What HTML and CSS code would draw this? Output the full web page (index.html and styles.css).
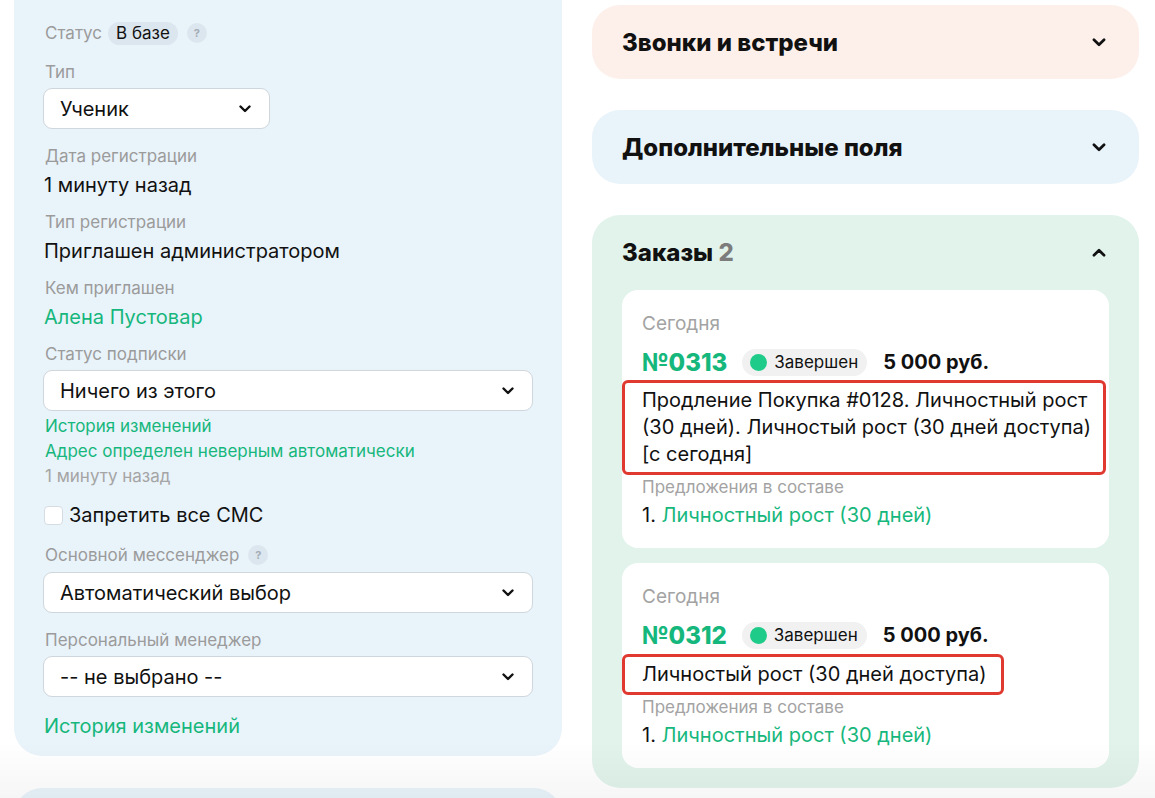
FILE: index.html
```html
<!DOCTYPE html>
<html lang="ru">

<head>
    <meta charset="UTF-8">
    <title>Карточка пользователя</title>
    <link rel="stylesheet" href="styles.css">
</head>

<body>
    <div class="layout">
        <div class="column">
            <section class="panel info">
                <div class="field row">
                    <span class="label">Статус</span>
                    <span class="tag">В базе</span>
                    <span class="hint">?</span>
                </div>

                <div class="field">
                    <div class="label">Тип</div>
                    <div class="select short">
                        <span>Ученик</span>
                        <svg class="chev" viewBox="0 0 12 8"><path d="M1.5 1.5 6 6l4.5-4.5" /></svg>
                    </div>
                </div>

                <div class="field">
                    <div class="label">Дата регистрации</div>
                    <div class="value">1 минуту назад</div>
                </div>

                <div class="field">
                    <div class="label">Тип регистрации</div>
                    <div class="value">Приглашен администратором</div>
                </div>

                <div class="field">
                    <div class="label">Кем приглашен</div>
                    <a class="value link" href="#">Алена Пустовар</a>
                </div>

                <div class="field">
                    <div class="label">Статус подписки</div>
                    <div class="select">
                        <span>Ничего из этого</span>
                        <svg class="chev" viewBox="0 0 12 8"><path d="M1.5 1.5 6 6l4.5-4.5" /></svg>
                    </div>
                    <a class="small link" href="#">История изменений</a>
                    <a class="small link" href="#">Адрес определен неверным автоматически</a>
                    <div class="small muted">1 минуту назад</div>
                </div>

                <label class="field check">
                    <span class="box"></span>
                    Запретить все СМС
                </label>

                <div class="field">
                    <div class="label row">Основной мессенджер <span class="hint">?</span></div>
                    <div class="select">
                        <span>Автоматический выбор</span>
                        <svg class="chev" viewBox="0 0 12 8"><path d="M1.5 1.5 6 6l4.5-4.5" /></svg>
                    </div>
                </div>

                <div class="field">
                    <div class="label">Персональный менеджер</div>
                    <div class="select">
                        <span>-- не выбрано --</span>
                        <svg class="chev" viewBox="0 0 12 8"><path d="M1.5 1.5 6 6l4.5-4.5" /></svg>
                    </div>
                </div>

                <a class="value link last" href="#">История изменений</a>
            </section>

            <section class="panel info next"></section>
        </div>

        <div class="column right">
            <section class="panel fold peach">
                <h2>Звонки и встречи</h2>
                <svg class="chev big" viewBox="0 0 12 8"><path d="M1.5 1.5 6 6l4.5-4.5" /></svg>
            </section>

            <section class="panel fold blue">
                <h2>Дополнительные поля</h2>
                <svg class="chev big" viewBox="0 0 12 8"><path d="M1.5 1.5 6 6l4.5-4.5" /></svg>
            </section>

            <section class="panel orders">
                <div class="orders-head">
                    <h2>Заказы <span class="count">2</span></h2>
                    <svg class="chev big" viewBox="0 0 12 8"><path d="M1.5 6.5 6 2l4.5 4.5" /></svg>
                </div>

                <article class="order">
                    <div class="date">Сегодня</div>
                    <div class="order-line">
                        <span class="num">№0313</span>
                        <span class="state"><i class="dot"></i>Завершен</span>
                        <span class="sum">5 000 руб.</span>
                    </div>
                    <p class="desc">Продление Покупка #0128. Личностный рост (30 дней). Личностый рост (30 дней доступа) [с сегодня]</p>
                    <div class="date small">Предложения в составе</div>
                    <div class="offer">1. <a href="#">Личностный рост (30 дней)</a></div>
                </article>

                <article class="order">
                    <div class="date">Сегодня</div>
                    <div class="order-line">
                        <span class="num">№0312</span>
                        <span class="state"><i class="dot"></i>Завершен</span>
                        <span class="sum">5 000 руб.</span>
                    </div>
                    <p class="desc fit">Личностый рост (30 дней доступа)</p>
                    <div class="date small">Предложения в составе</div>
                    <div class="offer">1. <a href="#">Личностный рост (30 дней)</a></div>
                </article>
            </section>
        </div>
    </div>
</body>

</html>
```

FILE: styles.css
```css
* {
    box-sizing: border-box;
}

body {
    margin: 0;
    background: #fff;
    font-family: Inter, "Noto Sans", sans-serif;
    color: #111;
    overflow: hidden;
}

/* light fade at the bottom of the window */
body::after {
    content: "";
    position: fixed;
    left: 0;
    right: 0;
    bottom: 0;
    height: 56px;
    background: linear-gradient(rgba(0, 0, 0, 0), rgba(0, 0, 0, 0.035));
    pointer-events: none;
}

a {
    text-decoration: none;
}

.layout {
    display: grid;
    grid-template-columns: 548px 547px;
    gap: 30px;
    padding-left: 14px;
}

.column {
    display: flex;
    flex-direction: column;
    gap: 32px;
}

.column.right {
    padding-top: 5px;
    gap: 31px;
}

.panel {
    border-radius: 28px;
}

/* left info panel */
.info {
    background: #e9f3fa;
    margin-top: -30px;
    padding: 51px 29px 17px;
    border-top-left-radius: 0;
    border-top-right-radius: 0;
}

.info.next {
    margin-top: 0;
    height: 120px;
    border-radius: 28px;
    padding: 0;
}

.field {
    display: flex;
    flex-direction: column;
    margin-bottom: 13px;
}

.row {
    flex-direction: row;
    align-items: center;
    gap: 6px;
}

.field.row {
    height: 24px;
    margin-bottom: 16px;
}

.label {
    font-size: 17px;
    line-height: 22px;
    color: #9b9b9b;
    margin-bottom: 5px;
    padding-left: 2px;
}

.label.row {
    display: flex;
    height: 24px;
    margin-bottom: 5px;
}

.field.row .label {
    margin: 0;
    padding-right: 0;
}

.tag {
    background: #dce6ee;
    border-radius: 12px;
    padding: 0 8px;
    font-size: 17px;
    line-height: 23px;
}

.hint {
    width: 20px;
    height: 20px;
    border-radius: 50%;
    background: #dce6ee;
    color: #a3acb4;
    font-size: 11px;
    font-weight: 700;
    display: flex;
    align-items: center;
    justify-content: center;
    margin-left: 3px;
}

.value {
    font-size: 20px;
    line-height: 26px;
    padding-left: 1px;
}

.value.last {
    margin-top: -2px;
}

.link {
    color: #16b77c;
}

.small {
    font-size: 17px;
    line-height: 25px;
    padding-left: 2px;
}

.muted {
    color: #a5a5a5;
}

.select {
    height: 41px;
    margin-bottom: 3px;
    background: #fff;
    border: 1px solid #cfd6dc;
    border-radius: 9px;
    display: flex;
    align-items: center;
    justify-content: space-between;
    padding: 0 18px 0 16px;
    font-size: 20px;
}

.select.short {
    width: 227px;
}

.chev {
    width: 12px;
    height: 8px;
    fill: none;
    stroke: #111;
    stroke-width: 2.4;
    stroke-linecap: round;
    stroke-linejoin: round;
}

.chev.big {
    width: 14px;
    height: 9px;
}

.check {
    flex-direction: row;
    align-items: center;
    gap: 6px;
    font-size: 20px;
    line-height: 26px;
    padding-left: 1px;
    margin-bottom: 15px;
}

.box {
    width: 19px;
    height: 19px;
    background: #fff;
    border: 1px solid #d6dde2;
    border-radius: 4px;
}

/* right column */
.fold {
    height: 74px;
    display: flex;
    align-items: center;
    justify-content: space-between;
    padding: 0 33px 0 30px;
}

.fold h2,
.orders h2 {
    margin: 0;
    font-size: 24px;
    font-weight: 800;
}

.peach {
    background: #fdf0eb;
}

.blue {
    background: #e9f3fa;
}

.orders {
    background: #e2f3ec;
    padding: 20px 30px 20px;
    display: flex;
    flex-direction: column;
    gap: 15px;
}

.orders-head {
    height: 34px;
    display: flex;
    align-items: center;
    justify-content: space-between;
    padding-right: 3px;
    margin-bottom: 6px;
}

.count {
    color: #7c7c7c;
}

.order {
    background: #fff;
    border-radius: 16px;
    padding: 22px 20px 20px;
}

.date {
    font-size: 19px;
    line-height: 24px;
    color: #a3a3a3;
}

.date.small {
    font-size: 17px;
    line-height: 22px;
    padding: 0;
}

.order-line {
    display: flex;
    align-items: center;
    height: 28px;
    margin-top: 12px;
}

.num {
    color: #16b77c;
    font-size: 24px;
    font-weight: 800;
    margin-right: 15px;
}

.state {
    display: flex;
    align-items: center;
    gap: 7px;
    height: 27px;
    padding: 0 9px 0 8px;
    border-radius: 14px;
    background: #f1f1f1;
    font-size: 17px;
    margin-right: 16px;
}

.dot {
    width: 17px;
    height: 17px;
    border-radius: 50%;
    background: #1fcb88;
}

.sum {
    font-size: 20px;
    font-weight: 700;
}

.desc {
    margin: 4px -17px 1px -20px;
    padding: 4px 10px 4px 17px;
    border: 3px solid #e0392f;
    border-radius: 6px;
    font-size: 20px;
    line-height: 27px;
}

.desc.fit {
    width: fit-content;
    margin-top: 5px;
    padding-right: 14px;
}

.offer {
    font-size: 20px;
    line-height: 26px;
    margin-top: 4px;
}

.offer a {
    color: #16b77c;
}
```
